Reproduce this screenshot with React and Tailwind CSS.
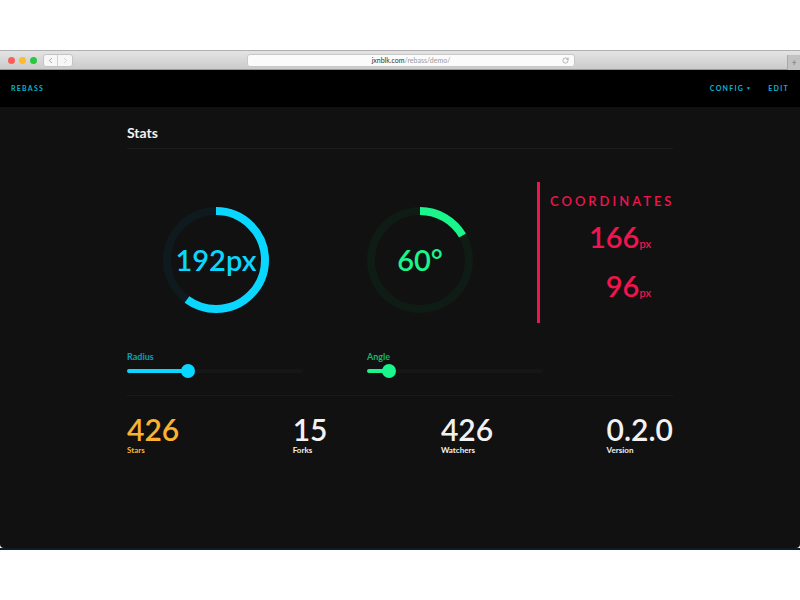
import { ChevronLeft, ChevronRight, RotateCw } from "lucide-react";

const R = 49;
const C = 2 * Math.PI * R;

function Ring({ fraction, color, track, label }) {
  return (
    <div className="relative w-[106px] h-[106px]">
      <svg width="106" height="106" viewBox="0 0 106 106">
        <circle cx="53" cy="53" r={R} fill="none" stroke={track} strokeWidth="8" />
        <circle
          cx="53"
          cy="53"
          r={R}
          fill="none"
          stroke={color}
          strokeWidth="8"
          strokeDasharray={`${C * fraction} ${C}`}
          transform="rotate(-90 53 53)"
        />
      </svg>
      <div
        className="absolute inset-0 flex items-center justify-center text-[29px] font-semibold"
        style={{ color }}
      >
        {label}
      </div>
    </div>
  );
}

function Slider({ label, labelColor, color, fill }) {
  return (
    <div className="w-[240px] shrink-0">
      <div className="text-[9px] font-bold leading-[12px]" style={{ color: labelColor }}>
        {label}
      </div>
      <div className="relative w-[176px] h-[14px] mt-[1px] flex items-center">
        <div className="w-full h-[4px] rounded-full bg-[#161616]" />
        <div
          className="absolute left-0 h-[4px] rounded-full"
          style={{ width: fill, background: color }}
        />
        <div
          className="absolute w-[14px] h-[14px] rounded-full"
          style={{ left: fill - 7, background: color }}
        />
      </div>
    </div>
  );
}

function Stat({ value, label, color }) {
  return (
    <div style={{ color }}>
      <div className="text-[30px] font-semibold leading-[34px]">{value}</div>
      <div className="text-[8px] font-bold leading-[8px]">{label}</div>
    </div>
  );
}

export default function App() {
  return (
    <div
      className="w-[800px] h-[600px] bg-white flex flex-col"
      style={{ fontFamily: "Lato, 'Noto Sans', sans-serif" }}
    >
      <div className="h-[50px]" />

      {/* Browser toolbar */}
      <div className="h-[20px] bg-gradient-to-b from-[#e4e4e4] to-[#cbcbcb] border-t border-[#b0b0b0] border-b border-b-[#9a9a9a] flex items-center">
        <div className="flex items-center gap-[4px] ml-[8px]">
          <div className="w-[7px] h-[7px] rounded-full bg-[#fc5f57]" />
          <div className="w-[7px] h-[7px] rounded-full bg-[#fdbc2e]" />
          <div className="w-[7px] h-[7px] rounded-full bg-[#29c840]" />
        </div>
        <div className="flex ml-[6px] h-[13px] rounded-[3px] bg-[#f7f7f7] border border-[#c4c4c4]">
          <div className="w-[14px] flex items-center justify-center border-r border-[#d0d0d0]">
            <ChevronLeft size={9} color="#6a6a6a" strokeWidth={1.5} />
          </div>
          <div className="w-[14px] flex items-center justify-center">
            <ChevronRight size={9} color="#b5b5b5" strokeWidth={1.5} />
          </div>
        </div>
        <div className="ml-[174px] w-[328px] h-[13px] rounded-[3px] bg-[#fbfbfb] border border-[#c8c8c8] flex items-center justify-center relative">
          <span className="text-[7px] leading-none text-[#9a9a9a]">
            <span className="text-[#333]">jxnblk.com</span>/rebass/demo/
          </span>
          <RotateCw size={7} color="#8a8a8a" className="absolute right-[5px]" />
        </div>
        <div className="ml-auto w-[13px] h-[15px] mt-[4px] bg-[#c2c2c2] border-l border-[#a8a8a8] flex items-center justify-center text-[9px] text-[#777] leading-none">
          +
        </div>
      </div>

      {/* Nav */}
      <nav className="h-[37px] bg-black flex items-center justify-between px-[11px] text-[7px] font-bold tracking-[0.18em] text-[#0bb6cf]">
        <span>REBASS</span>
        <div className="flex items-center">
          <span>CONFIG</span>
          <span className="ml-[2px] text-[5px]">▼</span>
          <span className="ml-[16px]">EDIT</span>
        </div>
      </nav>

      {/* Content */}
      <main className="h-[441px] bg-[#111111] rounded-b-[4px]">
        <div className="ml-[127px] w-[546px]">
          <div className="pt-[16px] pb-[5px] border-b border-[#1c1c1c] text-[14px] leading-[20px] font-bold text-[#f2f2f2]">
            Stats
          </div>

          <div className="flex mt-[33px] h-[141px]">
            <div className="w-[240px] shrink-0 pt-[25px] pl-[36px]">
              <Ring fraction={0.6} color="#0ad7ff" track="#0f1a1e" label="192px" />
            </div>
            <div className="w-[170px] shrink-0 pt-[25px]">
              <Ring fraction={1 / 6} color="#1af58c" track="#0f1c16" label="60°" />
            </div>
            <div className="w-[136px] shrink-0 border-l-[3px] border-[#f0144f] pl-[10px] text-[#f0144f] whitespace-nowrap">
              <div className="pt-[10px] text-[13px] leading-[18px] font-semibold tracking-[0.23em]">
                COORDINATES
              </div>
              <div className="mt-[11px] pr-[22px] text-right leading-[32px]">
                <span className="text-[29px] font-semibold">166</span>
                <span className="text-[11px] font-semibold">px</span>
              </div>
              <div className="mt-[10px] pr-[22px] text-right leading-[32px]">
                <span className="text-[29px] font-semibold">96</span>
                <span className="text-[11px] font-semibold">px</span>
              </div>
            </div>
          </div>

          <div className="flex mt-[28px]">
            <Slider label="Radius" labelColor="#0aa2bb" color="#0ad7ff" fill={61} />
            <Slider label="Angle" labelColor="#13b86a" color="#1af58c" fill={22} />
          </div>

          <div className="h-px bg-[#1a1a1a] mt-[17px]" />

          <div className="flex justify-between mt-[16px]">
            <Stat value="426" label="Stars" color="#fbb22f" />
            <Stat value="15" label="Forks" color="#f2f2f2" />
            <Stat value="426" label="Watchers" color="#f2f2f2" />
            <Stat value="0.2.0" label="Version" color="#f2f2f2" />
          </div>
        </div>
      </main>
      <div className="h-[2px] bg-[#0d1b2a]" />
    </div>
  );
}
